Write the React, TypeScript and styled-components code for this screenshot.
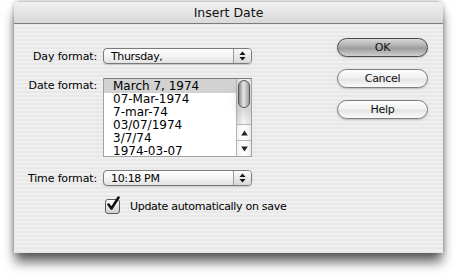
import React, { FC, ReactElement } from "react";
import styled, { createGlobalStyle } from "styled-components";

const dateFormats = [
  "March 7, 1974",
  "07-Mar-1974",
  "7-mar-74",
  "03/07/1974",
  "3/7/74",
  "1974-03-07",
];

const GlobalStyle = createGlobalStyle`
  html, body {
    margin: 0;
    padding: 0;
    background: #ffffff;
  }
  body {
    font-family: "DejaVu Sans", "Liberation Sans", sans-serif;
    font-size: 11px;
    letter-spacing: -0.15px;
    color: #000;
  }
`;

const PopupArrows: FC = (): ReactElement => (
  <svg width="7" height="10" viewBox="0 0 7 10">
    <path d="M3.5 0.5 L6.5 4 L0.5 4 Z" fill="#111" />
    <path d="M0.5 6 L6.5 6 L3.5 9.5 Z" fill="#111" />
  </svg>
);

const Popup: FC<{ value: string }> = ({ value }): ReactElement => (
  <StyledPopup>
    <span>{value}</span>
    <StyledPopupButton>
      <PopupArrows />
    </StyledPopupButton>
  </StyledPopup>
);

const Scrollbar: FC = (): ReactElement => (
  <StyledScrollbar>
    <StyledTrack>
      <StyledThumb />
    </StyledTrack>
    <StyledArrow>
      <svg width="7" height="6" viewBox="0 0 7 6">
        <path d="M3.5 0.5 L6.8 5.5 L0.2 5.5 Z" fill="#222" />
      </svg>
    </StyledArrow>
    <StyledArrow>
      <svg width="7" height="6" viewBox="0 0 7 6">
        <path d="M0.2 0.5 L6.8 0.5 L3.5 5.5 Z" fill="#222" />
      </svg>
    </StyledArrow>
  </StyledScrollbar>
);

export const App: FC = (): ReactElement => {
  return (
    <StyledPage>
      <GlobalStyle />
      <StyledWindow>
        <StyledTitleBar>Insert Date</StyledTitleBar>
        <StyledBody>
          <StyledForm>
            <StyledLabel>Day format:</StyledLabel>
            <Popup value="Thursday," />

            <StyledLabel $top>Date format:</StyledLabel>
            <StyledList>
              <StyledItems>
                {dateFormats.map((f, i) => (
                  <StyledItem key={f} $selected={i === 0}>
                    {f}
                  </StyledItem>
                ))}
              </StyledItems>
              <Scrollbar />
            </StyledList>

            <StyledLabel>Time format:</StyledLabel>
            <Popup value="10:18 PM" />

            <span />
            <StyledCheckRow>
              <StyledCheckbox>
                <svg width="17" height="17" viewBox="0 0 17 17">
                  <path
                    d="M3.5 8.5 L6.5 12.5 L13.5 1.5"
                    fill="none"
                    stroke="#111"
                    strokeWidth="2.6"
                    strokeLinecap="round"
                    strokeLinejoin="round"
                  />
                </svg>
              </StyledCheckbox>
              Update automatically on save
            </StyledCheckRow>
          </StyledForm>

          <StyledButtons>
            <StyledButton $default>OK</StyledButton>
            <StyledButton>Cancel</StyledButton>
            <StyledButton>Help</StyledButton>
          </StyledButtons>
        </StyledBody>
      </StyledWindow>
    </StyledPage>
  );
};

export default App;

const StyledPage = styled.div`
  height: 277px;
  box-sizing: border-box;
  padding: 1px 0 0 14px;
  overflow: hidden;
`;

const StyledWindow = styled.div`
  width: 429px;
  height: 252px;
  display: flex;
  flex-direction: column;
  border-radius: 6px 6px 0 0;
  overflow: hidden;
  background: repeating-linear-gradient(
    to bottom,
    #efefef 0px,
    #efefef 2px,
    #e8e8e8 2px,
    #e8e8e8 4px
  );
  box-shadow: 0 10px 12px -1px rgba(0, 0, 0, 0.62), 0 0 5px rgba(0, 0, 0, 0.28);
`;

const StyledTitleBar = styled.div`
  flex: none;
  display: flex;
  align-items: center;
  justify-content: center;
  font-size: 12.5px;
  letter-spacing: 0;
  color: #111;
  background: linear-gradient(to bottom, #f0f0f0, #d9d9d9);
  border-bottom: 1px solid #7c7c7c;
  border-top: 1px solid #cacaca;
  box-sizing: border-box;
  height: 23px;
`;

const StyledBody = styled.div`
  flex: 1;
  display: flex;
  justify-content: space-between;
  padding: 24px 15px 0 0;
`;

const StyledForm = styled.div`
  display: grid;
  grid-template-columns: 83px 149px;
  column-gap: 6px;
  row-gap: 13px;
  align-content: start;
  align-items: center;
`;

const StyledLabel = styled.div<{ $top?: boolean }>`
  text-align: right;
  white-space: nowrap;
  align-self: ${(p) => (p.$top ? "start" : "center")};
  margin-top: ${(p) => (p.$top ? "2px" : "0")};
`;

const StyledPopup = styled.div`
  height: 16px;
  box-sizing: border-box;
  display: flex;
  align-items: center;
  justify-content: space-between;
  border: 1px solid #7a7a7a;
  border-radius: 4px;
  background: linear-gradient(to bottom, #ffffff 0%, #f4f4f4 50%, #e2e2e2 100%);
  box-shadow: 0 1px 1px rgba(0, 0, 0, 0.15);

  span {
    padding-left: 7px;
    letter-spacing: -0.35px;
  }
`;

const StyledPopupButton = styled.div`
  width: 17px;
  height: 100%;
  display: flex;
  align-items: center;
  justify-content: center;
  border-left: 1px solid #9a9a9a;
  border-radius: 0 3px 3px 0;
  background: linear-gradient(to bottom, #fafafa, #d8d8d8);
`;

const StyledList = styled.div`
  height: 79px;
  margin-top: 1px;
  box-sizing: border-box;
  display: flex;
  background: #fff;
  border: 1px solid #a0a0a0;
  border-top-color: #7a7a7a;
  overflow: hidden;
`;

const StyledItems = styled.div`
  flex: 1;
`;

const StyledItem = styled.div<{ $selected?: boolean }>`
  height: 13.1px;
  line-height: 13.1px;
  padding-left: 9px;
  font-size: 12px;
  letter-spacing: 0;
  background: ${(p) => (p.$selected ? "#d2d2d2" : "transparent")};
  white-space: nowrap;

  &:first-child {
    height: 14px;
    line-height: 14px;
  }
`;

const StyledScrollbar = styled.div`
  width: 15px;
  flex: none;
  display: flex;
  flex-direction: column;
  border-left: 1px solid #b4b4b4;
  box-sizing: border-box;
`;

const StyledTrack = styled.div`
  flex: 1;
  padding: 1px 1px 0;
  background: linear-gradient(to right, #d6d6d6, #f6f6f6 45%, #e0e0e0);
`;

const StyledThumb = styled.div`
  height: 26px;
  border: 1px solid #555;
  border-radius: 6px;
  background: linear-gradient(to right, #8a8a8a, #e6e6e6 45%, #a0a0a0);
  box-shadow: 0 8px 10px rgba(0, 0, 0, 0.15);
`;

const StyledArrow = styled.div`
  height: 15px;
  flex: none;
  display: flex;
  align-items: center;
  justify-content: center;
  border-top: 1px solid #b4b4b4;
  background: linear-gradient(to right, #f2f2f2, #ffffff 50%, #ececec);
`;

const StyledCheckRow = styled.label`
  display: flex;
  align-items: center;
  gap: 10px;
  padding-left: 2px;
  font-size: 11px;
  letter-spacing: -0.3px;
  white-space: nowrap;
`;

const StyledCheckbox = styled.span`
  position: relative;
  flex: none;
  width: 15px;
  height: 15px;
  box-sizing: border-box;
  border: 1px solid #5c5c5c;
  border-radius: 3px;
  background: linear-gradient(to bottom, #ffffff, #cfcfcf);

  svg {
    position: absolute;
    left: -1px;
    top: -4px;
  }
`;

const StyledButtons = styled.div`
  display: flex;
  flex-direction: column;
  gap: 12px;
  margin-top: -10px;
`;

const StyledButton = styled.button<{ $default?: boolean }>`
  width: 91px;
  height: 19px;
  padding: 0;
  font-family: inherit;
  font-size: 11px;
  letter-spacing: -0.3px;
  color: #111;
  border: 1px solid ${(p) => (p.$default ? "#4a4a4a" : "#7e7e7e")};
  border-radius: 10px;
  background: ${(p) =>
    p.$default
      ? "linear-gradient(to bottom, #d8d8d8 0%, #a8a8a8 48%, #9a9a9a 52%, #cfcfcf 100%)"
      : "linear-gradient(to bottom, #fdfdfd 0%, #f0f0f0 48%, #e4e4e4 52%, #fafafa 100%)"};
  box-shadow: 0 1px 2px rgba(0, 0, 0, 0.2);
`;
